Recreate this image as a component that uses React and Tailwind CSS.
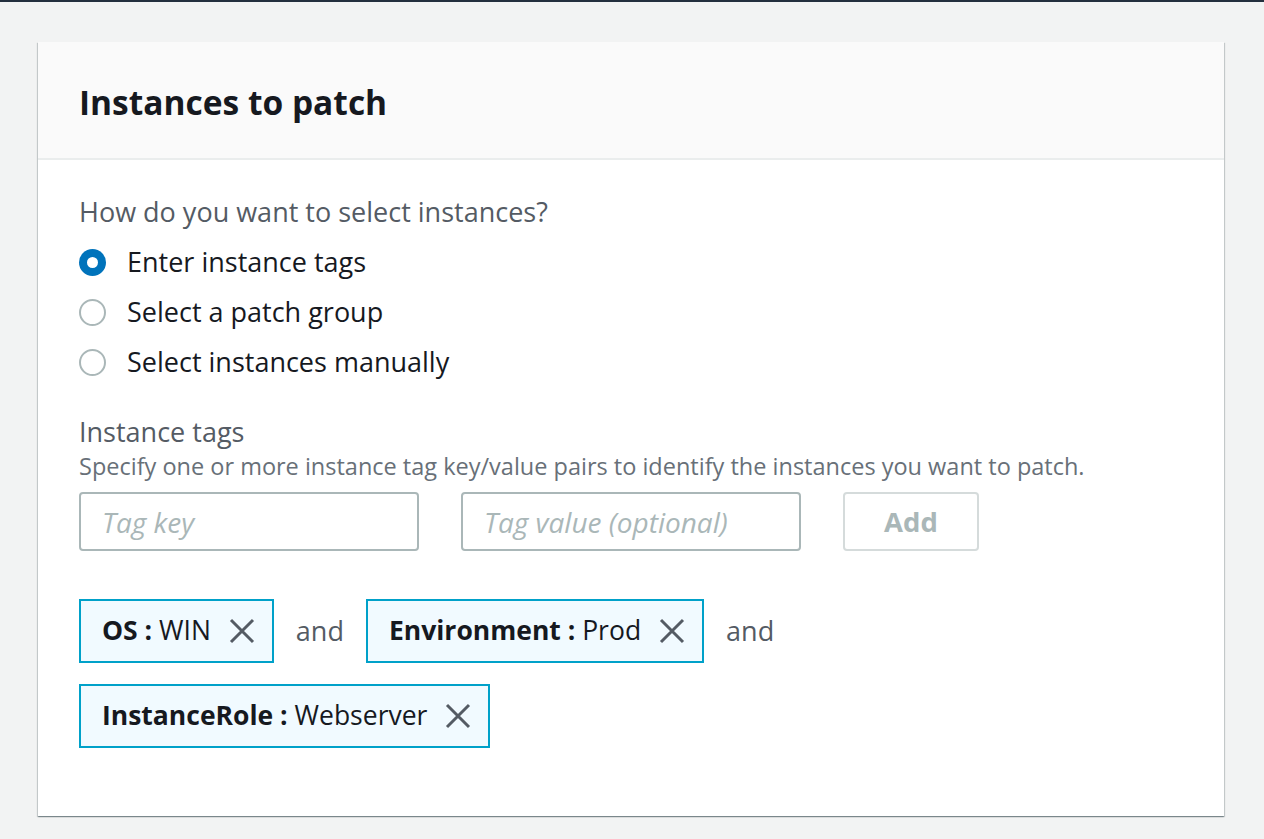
import React from "react";

const XIcon = () => (
  <svg viewBox="0 0 26 26" className="w-[26px] h-[26px] text-[#545b64] shrink-0" fill="none" stroke="currentColor" strokeWidth="3">
    <path d="M2 2 L24 24 M24 2 L2 24" />
  </svg>
);

const Token = ({ k, v }) => (
  <div className="h-[64px] flex items-center gap-[18px] pl-[21px] pr-[17px] border-2 border-[#00a1c9] bg-[#f1faff]">
    <span className="text-[26.5px] text-[#16191f] whitespace-nowrap">
      <span className="font-bold">{k} :</span> {v}
    </span>
    <XIcon />
  </div>
);

const Radio = ({ checked, label }) => (
  <label className="flex items-center h-[50px] gap-[21px]">
    {checked ? (
      <span className="w-[27px] h-[27px] rounded-full bg-[#0073bb] flex items-center justify-center">
        <span className="w-[11px] h-[11px] rounded-full bg-white" />
      </span>
    ) : (
      <span className="w-[27px] h-[27px] rounded-full border-2 border-[#aab7b8] bg-white" />
    )}
    <span className="text-[27px] text-[#16191f]">{label}</span>
  </label>
);

export default function App() {
  return (
    <div className="min-h-[839px] bg-[#f2f3f3] font-['Open_Sans',sans-serif]">
      <div className="h-[2px] bg-[#232f3e]" />
      <div className="pt-[40px] px-[38px]">
        <div className="w-[1186px] bg-white shadow-[0_1px_1px_0_rgba(0,28,36,0.3),1px_1px_1px_0_rgba(0,28,36,0.15),-1px_1px_1px_0_rgba(0,28,36,0.15)]">
          <div className="h-[118px] bg-[#fafafa] border-b-2 border-[#eaeded] flex items-center px-[41px] pt-[4px]">
            <h2 className="text-[33.5px] font-bold text-[#16191f]">Instances to patch</h2>
          </div>
          <div className="px-[41px] pt-[35px] pb-[68px]">
            <div className="text-[27px] text-[#545b64] leading-[34px]">How do you want to select instances?</div>
            <div className="mt-[8px]">
              <Radio checked label="Enter instance tags" />
              <Radio label="Select a patch group" />
              <Radio label="Select instances manually" />
            </div>
            <div className="mt-[28px] text-[27px] text-[#545b64] leading-[34px]">Instance tags</div>
            <div className="mt-[2px] text-[23.5px] text-[#687078] leading-[30px] whitespace-nowrap">
              Specify one or more instance tag key/value pairs to identify the instances you want to patch.
            </div>
            <div className="flex gap-[42px] mt-[11px]">
              <div className="w-[340px] h-[59px] border-2 border-[#aab7b8] rounded-[4px] flex items-center px-[21px] text-[28px] italic text-[#aab7b8]">Tag key</div>
              <div className="w-[340px] h-[59px] border-2 border-[#aab7b8] rounded-[4px] flex items-center px-[21px] text-[28px] italic text-[#aab7b8] whitespace-nowrap">Tag value (optional)</div>
              <div className="w-[136px] h-[59px] border-2 border-[#d5dbdb] rounded-[4px] flex items-center justify-center text-[27.5px] font-bold text-[#aab7b8]">Add</div>
            </div>
            <div className="mt-[48px] flex flex-wrap items-center gap-x-[22px] gap-y-[21px] w-[740px]">
              <Token k="OS" v="WIN" />
              <span className="text-[27px] text-[#545b64]">and</span>
              <Token k="Environment" v="Prod" />
              <span className="text-[27px] text-[#545b64]">and</span>
              <Token k="InstanceRole" v="Webserver" />
            </div>
          </div>
        </div>
      </div>
    </div>
  );
}
